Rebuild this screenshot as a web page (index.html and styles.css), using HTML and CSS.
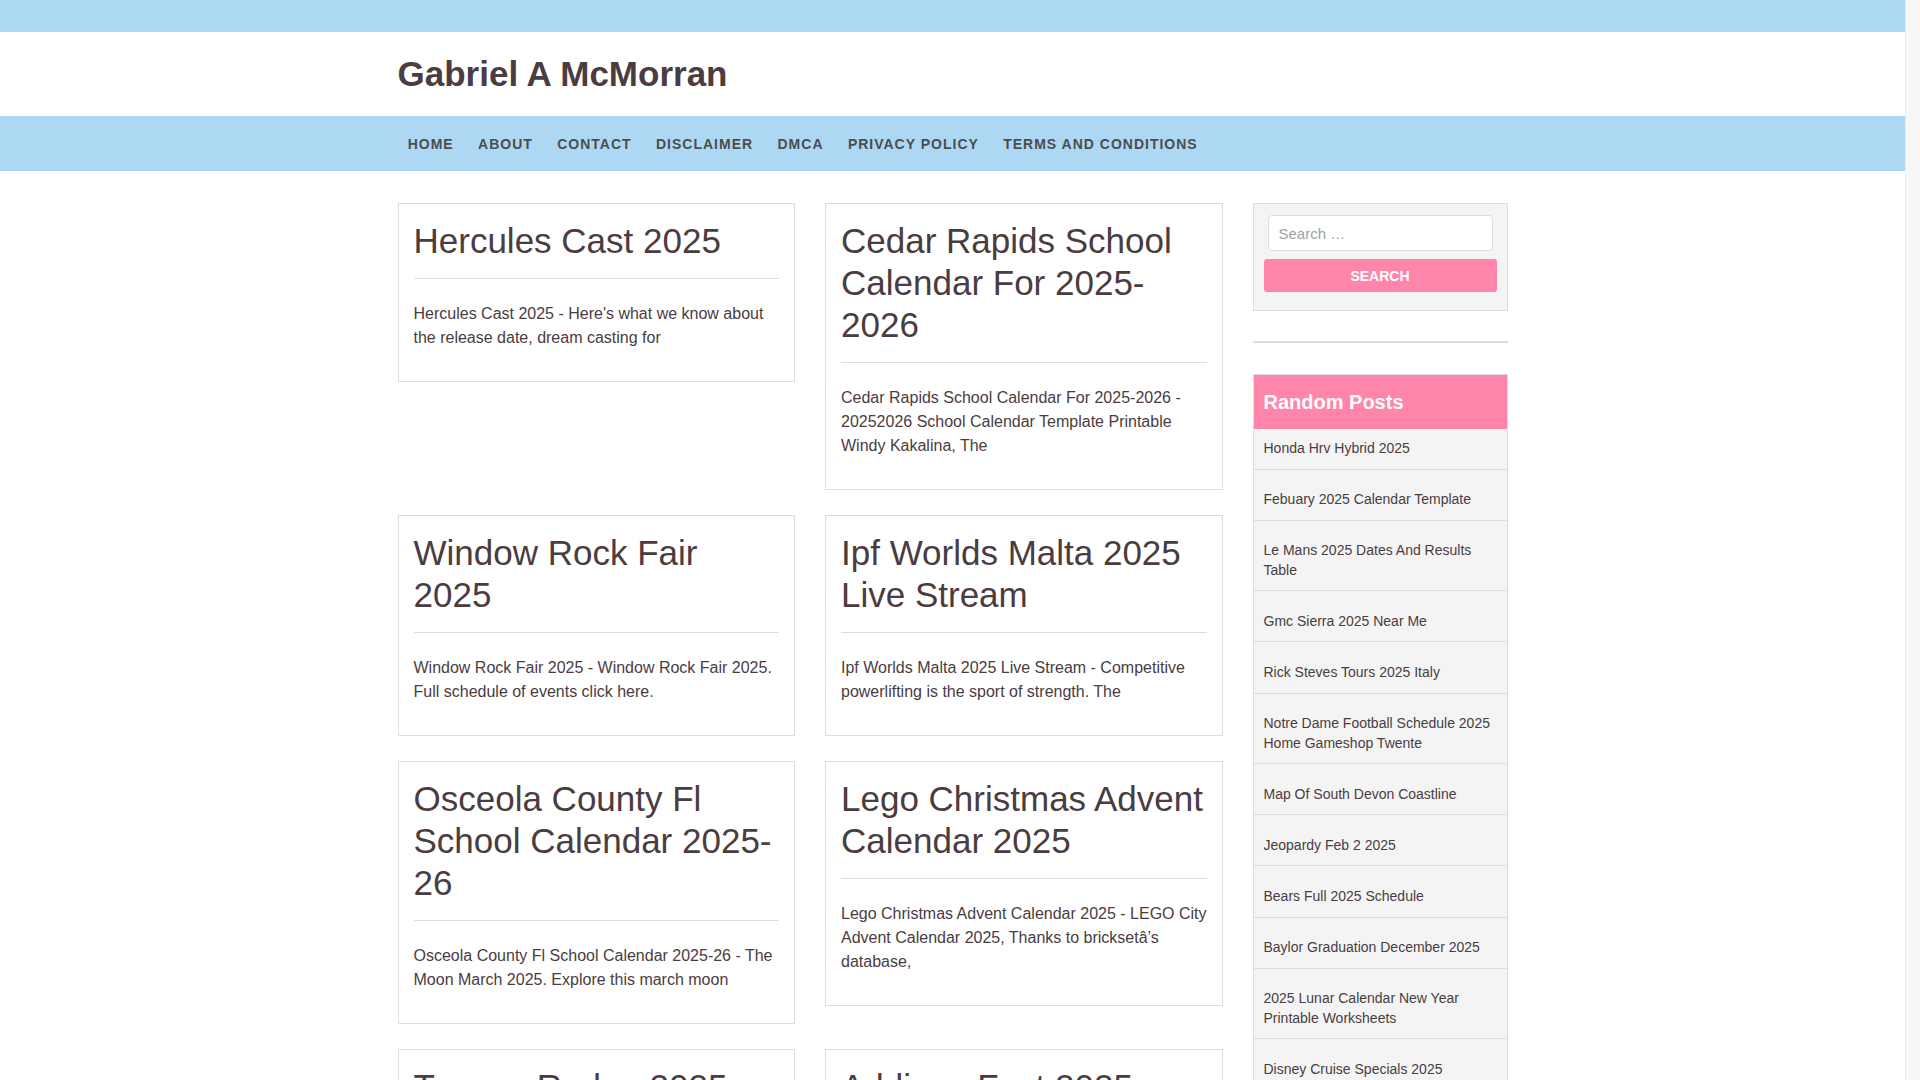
FILE: index.html
```html
<!DOCTYPE html>
<html lang="en">
<head>
<meta charset="utf-8">
<title>Gabriel A McMorran</title>
<link rel="stylesheet" href="styles.css">
</head>
<body>
<div class="page">
<div class="topbar"></div>
<header class="site-header">
  <div class="container">
    <h1 class="site-title">Gabriel A McMorran</h1>
  </div>
</header>
<nav class="main-nav">
  <div class="container">
    <ul class="menu">
      <li><a href="#">Home</a></li>
      <li><a href="#">About</a></li>
      <li><a href="#">Contact</a></li>
      <li><a href="#">Disclaimer</a></li>
      <li><a href="#">DMCA</a></li>
      <li><a href="#">Privacy Policy</a></li>
      <li><a href="#">Terms and Conditions</a></li>
    </ul>
  </div>
</nav>
<div class="container content">
  <main class="posts">
    <article class="card">
      <h2 class="card-title">Hercules Cast 2025</h2>
      <p class="card-excerpt">Hercules Cast 2025 - Here's what we know about the release date, dream casting for</p>
    </article>
    <article class="card">
      <h2 class="card-title">Cedar Rapids School Calendar For 2025-2026</h2>
      <p class="card-excerpt">Cedar Rapids School Calendar For 2025-2026 - 20252026 School Calendar Template Printable Windy Kakalina, The</p>
    </article>
    <article class="card">
      <h2 class="card-title">Window Rock Fair 2025</h2>
      <p class="card-excerpt">Window Rock Fair 2025 - Window Rock Fair 2025. Full schedule of events click here.</p>
    </article>
    <article class="card">
      <h2 class="card-title">Ipf Worlds Malta 2025 Live Stream</h2>
      <p class="card-excerpt">Ipf Worlds Malta 2025 Live Stream - Competitive powerlifting is the sport of strength. The</p>
    </article>
    <article class="card">
      <h2 class="card-title">Osceola County Fl School Calendar 2025-26</h2>
      <p class="card-excerpt">Osceola County Fl School Calendar 2025-26 - The Moon March 2025. Explore this march moon</p>
    </article>
    <article class="card">
      <h2 class="card-title">Lego Christmas Advent Calendar 2025</h2>
      <p class="card-excerpt">Lego Christmas Advent Calendar 2025 - LEGO City Advent Calendar 2025, Thanks to bricksetâ’s database,</p>
    </article>
    <article class="card">
      <h2 class="card-title">Tucson Rodeo 2025</h2>
      <p class="card-excerpt">Tucson Rodeo 2025 - The annual rodeo returns in February with parade and events for</p>
    </article>
    <article class="card">
      <h2 class="card-title">Addison Fest 2025</h2>
      <p class="card-excerpt">Addison Fest 2025 - Everything you need to know about the festival lineup, tickets and</p>
    </article>
  </main>
  <aside class="sidebar">
    <section class="widget search-widget">
      <form class="search-form">
        <input class="search-field" type="search" placeholder="Search …">
        <button class="search-submit" type="button">Search</button>
      </form>
    </section>
    <div class="widget-sep"></div>
    <section class="widget random-posts">
      <h3 class="widget-title">Random Posts</h3>
      <ul class="post-list">
        <li><a href="#">Honda Hrv Hybrid 2025</a></li>
        <li><a href="#">Febuary 2025 Calendar Template</a></li>
        <li><a href="#">Le Mans 2025 Dates And Results Table</a></li>
        <li><a href="#">Gmc Sierra 2025 Near Me</a></li>
        <li><a href="#">Rick Steves Tours 2025 Italy</a></li>
        <li><a href="#">Notre Dame Football Schedule 2025 Home Gameshop Twente</a></li>
        <li><a href="#">Map Of South Devon Coastline</a></li>
        <li><a href="#">Jeopardy Feb 2 2025</a></li>
        <li><a href="#">Bears Full 2025 Schedule</a></li>
        <li><a href="#">Baylor Graduation December 2025</a></li>
        <li><a href="#">2025 Lunar Calendar New Year Printable Worksheets</a></li>
        <li><a href="#">Disney Cruise Specials 2025</a></li>
        <li><a href="#">Ohio State Football 2025 Roster</a></li>
      </ul>
    </section>
  </aside>
</div>
</div>
<div class="scrollbar"></div>
</body>
</html>
```
FILE: styles.css
```css
html, body {
  margin: 0;
  padding: 0;
}

body {
  font-family: "Liberation Sans", Arial, Helvetica, sans-serif;
  color: #4b3c41;
  background: #ffffff;
}

.page {
  margin-right: 15px;
}

.scrollbar {
  position: fixed;
  top: 0;
  right: 0;
  width: 14px;
  height: 100vh;
  background: #f7f7f7;
  border-left: 1px solid #ececec;
}

a {
  color: inherit;
  text-decoration: none;
}

.container {
  width: 1110px;
  margin: 0 auto;
}

.topbar {
  height: 32px;
  background: #acd8f3;
}

.site-header {
  background: #ffffff;
  padding: 21px 0;
}

.site-title {
  margin: 0;
  font-size: 35px;
  line-height: 42px;
  font-weight: 700;
  color: #4b3c41;
}

.main-nav {
  background: #acd8f3;
}

.menu {
  display: flex;
  align-items: center;
  height: 55px;
  margin: 0 0 0 -2px;
  padding: 0;
  list-style: none;
}

.menu a {
  display: block;
  padding: 0 12.2px;
  font-size: 14px;
  font-weight: 700;
  letter-spacing: 1px;
  text-transform: uppercase;
  color: #4d4d4d;
}

.content {
  display: grid;
  grid-template-columns: 825px 255px;
  column-gap: 30px;
  margin-top: 32px;
  padding-bottom: 40px;
}

.posts {
  display: grid;
  grid-template-columns: 1fr 1fr;
  column-gap: 30px;
  row-gap: 25px;
  align-items: start;
}

.card {
  border: 1px solid #dddddd;
  padding: 16px 15px 15px;
  background: #ffffff;
}

.card-title {
  margin: 0;
  padding-bottom: 16px;
  border-bottom: 1px solid #dddddd;
  font-size: 35px;
  line-height: 42px;
  font-weight: 400;
  color: #4b3c41;
}

.card-excerpt {
  margin: 23px 0 16px;
  font-size: 16px;
  line-height: 24px;
  color: #4b3c41;
}

.search-widget {
  border: 1px solid #dddddd;
  background: #f4f4f4;
  padding: 10px 10px 18px;
}

.search-field {
  display: block;
  box-sizing: border-box;
  width: calc(100% - 8px);
  height: 36px;
  margin: 1px 4px 0;
  padding: 0 10px;
  border: 1px solid #dddddd;
  border-radius: 4px;
  background: #ffffff;
  font-family: "Liberation Sans", Arial, sans-serif;
  font-size: 15px;
  color: #4b3c41;
  outline: none;
}

.search-field::placeholder {
  color: #9aa2a5;
}

.search-submit {
  display: block;
  width: 100%;
  height: 33px;
  margin-top: 8px;
  border: 0;
  border-radius: 3px;
  background: #ff85ab;
  color: #ffffff;
  font-family: "Liberation Sans", Arial, sans-serif;
  font-size: 14px;
  font-weight: 700;
  text-transform: uppercase;
}

.widget-sep {
  height: 2px;
  background: #dddddd;
  margin: 30px 0 31px;
}

.random-posts {
  border: 1px solid #dddddd;
}

.widget-title {
  margin: 0;
  padding: 15px 10px;
  background: #ff85ab;
  color: #ffffff;
  font-size: 20px;
  line-height: 24px;
  font-weight: 700;
}

.post-list {
  margin: 0;
  padding: 0;
  list-style: none;
}

.post-list li {
  background: #f4f4f4;
  padding: 10px;
  border-bottom: 1px solid #dddddd;
  font-size: 14px;
  line-height: 1.4;
}

.post-list li + li {
  padding-top: 20.5px;
}

.post-list a {
  color: #4b3c41;
}
```
